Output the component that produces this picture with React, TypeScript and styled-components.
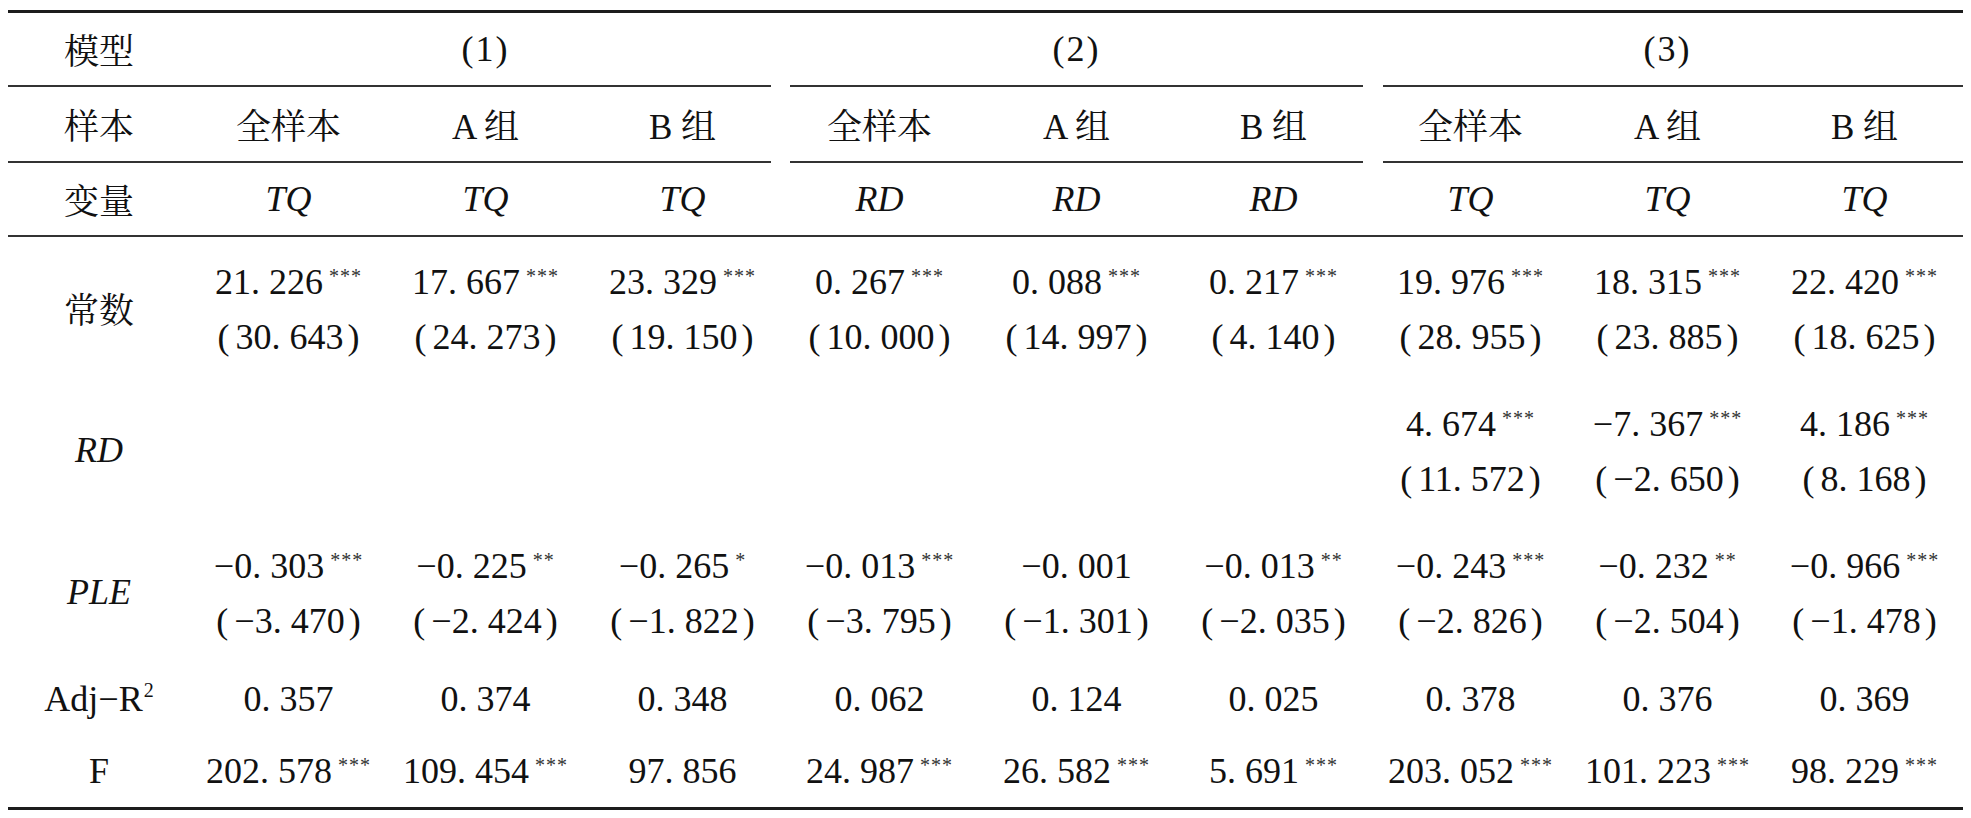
import React from 'react';
import styled, { createGlobalStyle } from 'styled-components';

const GlobalStyle = createGlobalStyle`
  html, body { margin: 0; padding: 0; background: #ffffff; }
  body {
    font-family: "Liberation Serif", "Noto Serif CJK SC", "Noto Sans CJK SC", serif;
    color: #111111;
  }
`;

const COLS = '182px repeat(9, 197px)';

const Page = styled.div`
  padding: 10px 8px;
`;

const Table = styled.div`
  width: 1955px;
  border-top: 3px solid #1c1c1c;
  border-bottom: 3px solid #1c1c1c;
`;

const Row = styled.div<{ $h: number }>`
  display: grid;
  grid-template-columns: ${COLS};
  height: ${(p) => p.$h}px;
  align-items: center;
`;

const Cell = styled.div<{ $span?: number }>`
  grid-column: span ${(p) => p.$span ?? 1};
  display: flex;
  flex-direction: column;
  align-items: center;
  justify-content: center;
  font-size: 36px;
  white-space: nowrap;
`;

const CjkText = styled.span`
  font-size: 35px;
`;

const ModelTag = styled.span`
  font-size: 36px;
  letter-spacing: 2px;
`;

const RuleRow = styled.div`
  display: grid;
  grid-template-columns: ${COLS};
  height: 2px;
`;

const RuleSeg = styled.div<{ $from: number; $to: number; $ml?: number; $mr?: number }>`
  grid-column: ${(p) => p.$from} / ${(p) => p.$to};
  margin: 0 ${(p) => p.$mr ?? 0}px 0 ${(p) => p.$ml ?? 0}px;
  background: #333333;
`;

const Stack = styled.div`
  display: flex;
  flex-direction: column;
  align-items: center;
  padding-top: 3px;
`;

const Line = styled.div`
  height: 55px;
  line-height: 55px;
  white-space: nowrap;
`;

const Stars = styled.span`
  font-size: 20px;
  line-height: 0;
  vertical-align: 11px;
  margin-left: 6px;
  letter-spacing: 1px;
  color: #333333;
`;

const Paren = styled.span<{ $close?: boolean }>`
  margin-left: ${(p) => (p.$close ? 4 : 0)}px;
  margin-right: ${(p) => (p.$close ? 0 : 6)}px;
`;

const Var = styled.span`
  font-style: italic;
`;

const Sup = styled.span`
  font-size: 20px;
  line-height: 0;
  vertical-align: 14px;
  margin-left: 1px;
`;

type Coef = { v: string; s?: string; t?: string };

const constRow: Coef[] = [
  { v: '21. 226', s: '***', t: '30. 643' },
  { v: '17. 667', s: '***', t: '24. 273' },
  { v: '23. 329', s: '***', t: '19. 150' },
  { v: '0. 267', s: '***', t: '10. 000' },
  { v: '0. 088', s: '***', t: '14. 997' },
  { v: '0. 217', s: '***', t: '4. 140' },
  { v: '19. 976', s: '***', t: '28. 955' },
  { v: '18. 315', s: '***', t: '23. 885' },
  { v: '22. 420', s: '***', t: '18. 625' },
];

const rdRow: (Coef | null)[] = [
  null, null, null, null, null, null,
  { v: '4. 674', s: '***', t: '11. 572' },
  { v: '\u22127. 367', s: '***', t: '\u22122. 650' },
  { v: '4. 186', s: '***', t: '8. 168' },
];

const pleRow: Coef[] = [
  { v: '\u22120. 303', s: '***', t: '\u22123. 470' },
  { v: '\u22120. 225', s: '**', t: '\u22122. 424' },
  { v: '\u22120. 265', s: '*', t: '\u22121. 822' },
  { v: '\u22120. 013', s: '***', t: '\u22123. 795' },
  { v: '\u22120. 001', t: '\u22121. 301' },
  { v: '\u22120. 013', s: '**', t: '\u22122. 035' },
  { v: '\u22120. 243', s: '***', t: '\u22122. 826' },
  { v: '\u22120. 232', s: '**', t: '\u22122. 504' },
  { v: '\u22120. 966', s: '***', t: '\u22121. 478' },
];

const adjRow = ['0. 357', '0. 374', '0. 348', '0. 062', '0. 124', '0. 025', '0. 378', '0. 376', '0. 369'];

const fRow: Coef[] = [
  { v: '202. 578', s: '***' },
  { v: '109. 454', s: '***' },
  { v: '97. 856' },
  { v: '24. 987', s: '***' },
  { v: '26. 582', s: '***' },
  { v: '5. 691', s: '***' },
  { v: '203. 052', s: '***' },
  { v: '101. 223', s: '***' },
  { v: '98. 229', s: '***' },
];

const samples = ['全样本', 'A 组', 'B 组', '全样本', 'A 组', 'B 组', '全样本', 'A 组', 'B 组'];
const vars = ['TQ', 'TQ', 'TQ', 'RD', 'RD', 'RD', 'TQ', 'TQ', 'TQ'];

const Value: React.FC<{ c: Coef }> = ({ c }) => (
  <Line>
    {c.v}
    {c.s && <Stars>{c.s}</Stars>}
  </Line>
);

const CoefCell: React.FC<{ c: Coef | null }> = ({ c }) => (
  <Cell>
    {c && (
      <Stack>
        <Value c={c} />
        {c.t && (
          <Line>
            <Paren>(</Paren>
            {c.t}
            <Paren $close>)</Paren>
          </Line>
        )}
      </Stack>
    )}
  </Cell>
);

const SplitRule: React.FC = () => (
  <RuleRow>
    <RuleSeg $from={1} $to={5} $mr={10} />
    <RuleSeg $from={5} $to={8} $ml={9} $mr={9} />
    <RuleSeg $from={8} $to={11} $ml={11} />
  </RuleRow>
);

export default function App() {
  return (
    <>
      <GlobalStyle />
      <Page>
        <Table>
          <Row $h={72}>
            <Cell>
              <CjkText>模型</CjkText>
            </Cell>
            <Cell $span={3}>
              <ModelTag>(1)</ModelTag>
            </Cell>
            <Cell $span={3}>
              <ModelTag>(2)</ModelTag>
            </Cell>
            <Cell $span={3}>
              <ModelTag>(3)</ModelTag>
            </Cell>
          </Row>
          <SplitRule />
          <Row $h={74}>
            <Cell>
              <CjkText>样本</CjkText>
            </Cell>
            {samples.map((s, i) => (
              <Cell key={i}>
                <CjkText>{s}</CjkText>
              </Cell>
            ))}
          </Row>
          <SplitRule />
          <Row $h={72}>
            <Cell>
              <CjkText>变量</CjkText>
            </Cell>
            {vars.map((v, i) => (
              <Cell key={i}>
                <Var>{v}</Var>
              </Cell>
            ))}
          </Row>
          <RuleRow>
            <RuleSeg $from={1} $to={11} />
          </RuleRow>
          <Row $h={142}>
            <Cell>
              <CjkText>常数</CjkText>
            </Cell>
            {constRow.map((c, i) => (
              <CoefCell key={i} c={c} />
            ))}
          </Row>
          <Row $h={142}>
            <Cell>
              <Var>RD</Var>
            </Cell>
            {rdRow.map((c, i) => (
              <CoefCell key={i} c={c} />
            ))}
          </Row>
          <Row $h={142}>
            <Cell>
              <Var>PLE</Var>
            </Cell>
            {pleRow.map((c, i) => (
              <CoefCell key={i} c={c} />
            ))}
          </Row>
          <Row $h={72}>
            <Cell>
              <Line>
                Adj{'\u2212'}R<Sup>2</Sup>
              </Line>
            </Cell>
            {adjRow.map((v, i) => (
              <Cell key={i}>
                <Line>{v}</Line>
              </Cell>
            ))}
          </Row>
          <Row $h={72}>
            <Cell>F</Cell>
            {fRow.map((c, i) => (
              <Cell key={i}>
                <Value c={c} />
              </Cell>
            ))}
          </Row>
        </Table>
      </Page>
    </>
  );
}
